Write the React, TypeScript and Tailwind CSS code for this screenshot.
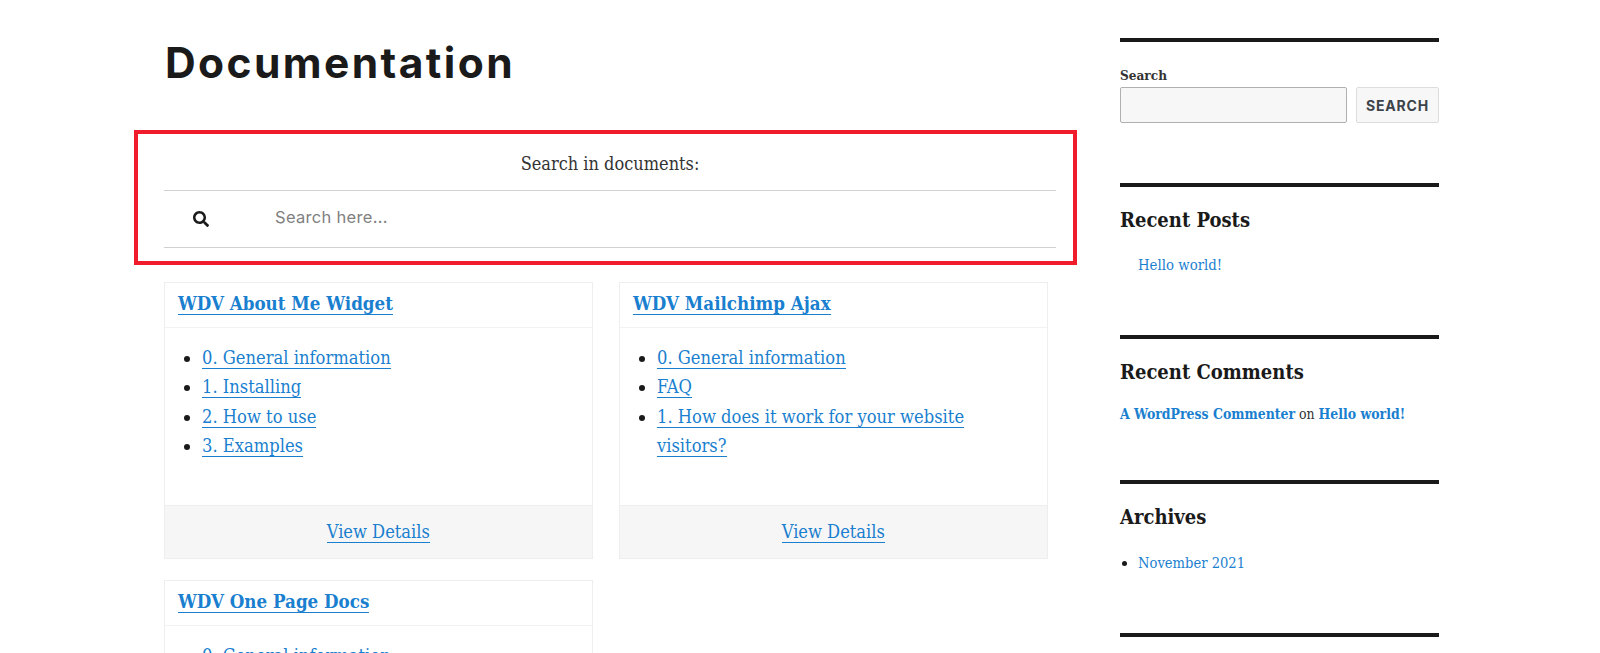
import React from 'react';
import { FaSearch } from 'react-icons/fa';

const serif = 'font-["DejaVu_Serif",serif] font-stretch-condensed';
const sans = 'font-["Inter",sans-serif]';
const link = 'text-[#1a7fcf] shadow-[0_1px_0_0_#1a7fcf]';

const docs = [
  {
    title: 'WDV About Me Widget',
    items: ['0. General information', '1. Installing', '2. How to use', '3. Examples'],
  },
  {
    title: 'WDV Mailchimp Ajax',
    items: ['0. General information', 'FAQ', '1. How does it work for your website visitors?'],
  },
  {
    title: 'WDV One Page Docs',
    items: ['0. General information', '1. Installing', '2. How to use'],
  },
];

const DocCard = ({ title, items }: { title: string; items: string[] }) => (
  <div className="flex h-[277px] flex-col border border-[#eeeeee]">
    <div className="h-[45px] border-b border-[#f2f2f2] px-[13px] pt-[8px] text-[18.6px] leading-[26px] font-bold">
      <a className={link}>{title}</a>
    </div>
    <ul className="flex-1 list-disc pt-[15px] pr-[70px] pl-[37px] text-[18.2px] leading-[29.3px] marker:text-[#1a1a1a]">
      {items.map((item) => (
        <li key={item}>
          <a className={link}>{item}</a>
        </li>
      ))}
    </ul>
    <div className="h-[53px] border-t border-[#eeeeee] bg-[#f6f6f6] pt-[12px] text-center text-[18.1px] leading-[28px]">
      <a className={link}>View Details</a>
    </div>
  </div>
);

const Widget = ({ title, className, children }: { title: string; className: string; children: React.ReactNode }) => (
  <div className={`border-t-4 border-[#1a1a1a] ${className}`}>
    <h2 className="pt-[20px] text-[20px] leading-[26px] font-bold text-[#1a1a1a]">{title}</h2>
    {children}
  </div>
);

export default function App() {
  return (
    <div className={`flex h-[653px] overflow-hidden bg-white pl-[134px] text-[#1a1a1a] ${serif}`}>
      {/* Contenu principal */}
      <main className="w-[943px] shrink-0">
        <h1 className={`pt-[35px] pl-[31px] text-[42.5px] leading-[56px] font-bold tracking-[2.4px] text-[#1a1a1a] ${sans}`}>
          Documentation
        </h1>
        <div className="mt-[39px] h-[135px] border-4 border-[#f01c2b] pr-[17px] pl-[26px]">
          <div className="h-[57px] border-b border-[#d1d1d1] pt-[17px] text-center text-[18px] leading-[26px] text-[#333333]">
            Search in documents:
          </div>
          <div className="flex h-[57px] items-center border-b border-[#d1d1d1]">
            <FaSearch className="ml-[29px] h-[16px] w-[16px] shrink-0 text-[#1a1a1a]" />
            <span className={`mb-[3px] ml-[66px] text-[16.5px] tracking-[0.3px] text-[#808080] ${sans}`}>Search here...</span>
          </div>
        </div>
        <div className="mt-[17px] ml-[30px] grid w-[884px] grid-cols-[428.5px_428.5px] gap-x-[26.5px] gap-y-[21px]">
          {docs.map((doc) => (
            <DocCard key={doc.title} title={doc.title} items={doc.items} />
          ))}
        </div>
      </main>

      {/* Barre latérale */}
      <aside className="ml-[43px] w-[319px] shrink-0 pt-[38px]">
        <div className="h-[145px] border-t-4 border-[#1a1a1a]">
          <div className="pt-[22px] text-[13.5px] leading-[23px] font-bold text-[#333333]">Search</div>
          <div className="flex gap-[9px]">
            <div className="h-[36px] w-[227px] rounded-[2px] border border-[#b0b0b0] bg-[#f7f7f7]" />
            <div className={`flex h-[36px] w-[83px] items-center justify-center rounded-[2px] border border-[#dddddd] bg-[#f7f7f7] text-[14px] font-bold tracking-[0.8px] text-[#3c434a] ${sans}`}>
              SEARCH
            </div>
          </div>
        </div>
        <Widget title="Recent Posts" className="h-[152px]">
          <a className="mt-[21px] ml-[18px] block text-[14.8px] leading-[22px] text-[#1a7fcf]">Hello world!</a>
        </Widget>
        <Widget title="Recent Comments" className="h-[145px]">
          <p className="mt-[18px] text-[13.9px] leading-[22px] text-[#333333]">
            <a className="font-bold text-[#1a7fcf]">A WordPress Commenter</a> on{' '}
            <a className="font-bold text-[#1a7fcf]">Hello world!</a>
          </p>
        </Widget>
        <Widget title="Archives" className="h-[153px]">
          <ul className="mt-[22px] list-disc pl-[18px] text-[14.6px] leading-[22px] marker:text-[#1a1a1a]">
            <li>
              <a className="text-[#1a7fcf]">November 2021</a>
            </li>
          </ul>
        </Widget>
        <div className="border-t-4 border-[#1a1a1a]" />
      </aside>
    </div>
  );
}
